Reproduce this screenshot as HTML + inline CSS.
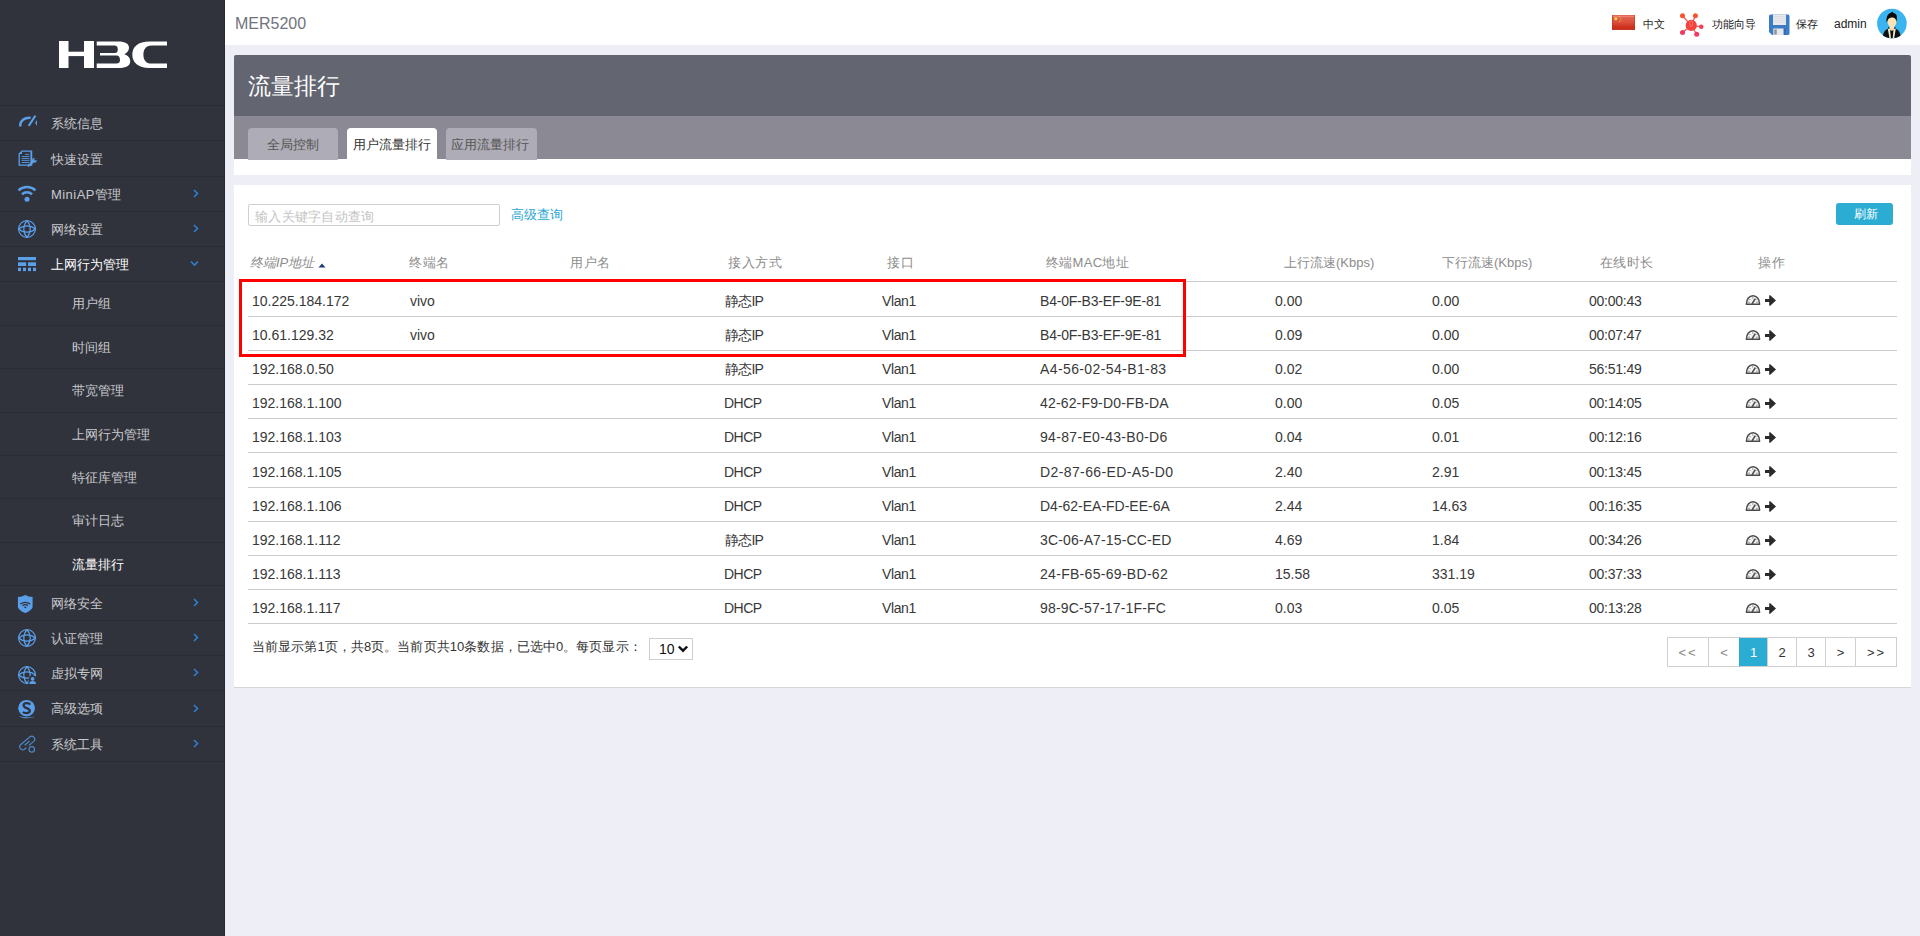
<!DOCTYPE html>
<html><head><meta charset="utf-8">
<style>
*{box-sizing:border-box}
html,body{margin:0;padding:0;width:1920px;height:936px;overflow:hidden;background:#eeeef6;font-family:"Liberation Sans",sans-serif;font-size:13px;color:#333}
.a{position:absolute;white-space:nowrap}
#side{position:absolute;left:0;top:0;width:225px;height:936px;background:#30333c;border-right:1px solid #272a31}
.sep{position:absolute;left:0;width:224px;height:1px;background:#2a2c33}
.mi{position:absolute;left:51px;color:#c9c9cc;font-size:13px;line-height:16px;white-space:nowrap}
.si{position:absolute;left:72px;color:#c9c9cc;font-size:13px;line-height:16px;white-space:nowrap}
.ic{position:absolute;left:17px}
.chev{position:absolute;left:192px}
#hdr{position:absolute;left:225px;top:0;width:1695px;height:45px;background:#fff}
#title{position:absolute;left:234px;top:55px;width:1677px;height:61px;background:#636571;border-radius:2px 2px 0 0}
#tabbar{position:absolute;left:234px;top:116px;width:1677px;height:43px;background:#8b8994}
.tab{position:absolute;top:128px;height:32px;background:#aeacb6;border-radius:4px 4px 0 0;color:#555;font-size:13px;line-height:32px;padding-top:1px}
#strip{position:absolute;left:234px;top:159px;width:1677px;height:16px;background:#fff}
#card{position:absolute;left:234px;top:185px;width:1677px;height:503px;background:#fff;border-bottom:1px solid #d6d6d6}
.th{position:absolute;color:#8c8c8c;font-size:13px;line-height:16px;white-space:nowrap}
.rl{position:absolute;left:248px;width:1649px;height:1px;background:#cbcbcb}
.td{position:absolute;color:#383838;font-size:14px;line-height:16px;white-space:nowrap}
.pg{position:absolute;top:637px;height:30px;border:1px solid #d0d0d0;border-right:none;text-align:center;line-height:30px;font-size:13px;color:#333;background:#fff}
</style></head><body>
<div id="side">
<svg class="a" style="left:59px;top:41px" width="108" height="27" viewBox="0 0 108 27"><g fill="#fff">
<rect x="0" y="0" width="9.5" height="27"/><rect x="25" y="0" width="10" height="27"/><rect x="9" y="10.7" width="16" height="4.4"/>
<path d="M37.7 0.6 H59 C66.5 0.6 70 3 70 6.8 C70 9.6 68.2 12 65.3 13.2 C68.7 14.2 71.2 16.8 71.2 20.2 C71.2 24.6 67.5 27 59.5 27 H37.7 V22.5 H57.5 C60 22.5 61 21 61 19 C61 16.5 60 14.4 57.5 14.4 H41 V12 H56 C58 12 58.8 10.3 58.8 8.2 C58.8 6 57.8 4.4 55.5 4.4 H37.7 Z"/>
<path d="M108 0.6 V4.4 H92.5 C86.8 4.4 84.4 8.5 84.4 13.8 C84.4 19 86.8 22.6 92.5 22.6 H108 V27 H90.5 C79 27 73.3 21.5 73.3 13.8 C73.3 6 79 0.6 90.5 0.6 Z"/>
</g></svg>
<div class="sep" style="top:105px"></div>
<div class="sep" style="top:140px"></div>
<div class="sep" style="top:176px"></div>
<div class="sep" style="top:211px"></div>
<div class="sep" style="top:246px"></div>
<div class="sep" style="top:281px"></div>
<div class="sep" style="top:325px"></div>
<div class="sep" style="top:368px"></div>
<div class="sep" style="top:412px"></div>
<div class="sep" style="top:455px"></div>
<div class="sep" style="top:498px"></div>
<div class="sep" style="top:542px"></div>
<div class="sep" style="top:585px"></div>
<div class="sep" style="top:620px"></div>
<div class="sep" style="top:655px"></div>
<div class="sep" style="top:690px"></div>
<div class="sep" style="top:726px"></div>
<div class="sep" style="top:761px"></div>
<div class="mi" style="top:115.5px">系统信息</div>
<div class="mi" style="top:152.0px">快速设置</div>
<div class="mi" style="top:186.5px;letter-spacing:0.45px">MiniAP管理</div>
<div class="mi" style="top:221.5px">网络设置</div>
<div class="mi" style="top:256.5px;color:#fff">上网行为管理</div>
<div class="mi" style="top:595.5px">网络安全</div>
<div class="mi" style="top:630.5px">认证管理</div>
<div class="mi" style="top:665.5px">虚拟专网</div>
<div class="mi" style="top:701.0px">高级选项</div>
<div class="mi" style="top:736.5px">系统工具</div>
<div class="si" style="top:296.0px">用户组</div>
<div class="si" style="top:339.5px">时间组</div>
<div class="si" style="top:383.0px">带宽管理</div>
<div class="si" style="top:426.5px">上网行为管理</div>
<div class="si" style="top:469.5px">特征库管理</div>
<div class="si" style="top:513.0px">审计日志</div>
<div class="si" style="top:556.5px;color:#fff">流量排行</div>
<svg class="chev" style="top:189.0px" width="8" height="9" viewBox="0 0 8 9"><path d="M2 1 L5.5 4.5 L2 8" fill="none" stroke="#2f7fd1" stroke-width="1.6"/></svg>
<svg class="chev" style="top:224.0px" width="8" height="9" viewBox="0 0 8 9"><path d="M2 1 L5.5 4.5 L2 8" fill="none" stroke="#2f7fd1" stroke-width="1.6"/></svg>
<svg class="chev" style="top:598.0px" width="8" height="9" viewBox="0 0 8 9"><path d="M2 1 L5.5 4.5 L2 8" fill="none" stroke="#2f7fd1" stroke-width="1.6"/></svg>
<svg class="chev" style="top:633.0px" width="8" height="9" viewBox="0 0 8 9"><path d="M2 1 L5.5 4.5 L2 8" fill="none" stroke="#2f7fd1" stroke-width="1.6"/></svg>
<svg class="chev" style="top:668.0px" width="8" height="9" viewBox="0 0 8 9"><path d="M2 1 L5.5 4.5 L2 8" fill="none" stroke="#2f7fd1" stroke-width="1.6"/></svg>
<svg class="chev" style="top:703.5px" width="8" height="9" viewBox="0 0 8 9"><path d="M2 1 L5.5 4.5 L2 8" fill="none" stroke="#2f7fd1" stroke-width="1.6"/></svg>
<svg class="chev" style="top:739.0px" width="8" height="9" viewBox="0 0 8 9"><path d="M2 1 L5.5 4.5 L2 8" fill="none" stroke="#2f7fd1" stroke-width="1.6"/></svg>
<svg class="chev" style="left:190px;top:260px" width="9" height="7" viewBox="0 0 9 7"><path d="M1 1.5 L4.5 5 L8 1.5" fill="none" stroke="#2f7fd1" stroke-width="1.6"/></svg>
<svg class="ic" style="top:114px" width="22" height="14" viewBox="0 0 22 14"><path d="M3.2 11.4 C3.6 6.6 7.2 3.7 12.6 3.7" fill="none" stroke="#5b9fe8" stroke-width="2.6" stroke-linecap="round"/><path d="M11.7 11.9 L18.4 1.6" stroke="#5b9fe8" stroke-width="2"/><path d="M18.2 8.8 L20 6 V11.9 Z" fill="#5b9fe8"/></svg>
<svg class="ic" style="top:150px;left:18px" width="22" height="18" viewBox="0 0 22 18"><path d="M1.2 4 L4 1.2 H13.6 V15.1 H1.2 Z" fill="none" stroke="#5b9fe8" stroke-width="1.3"/><path d="M1.2 4 L4 1.2 V4 Z" fill="#5b9fe8"/><path d="M12.5 2 V14.5" stroke="#5b9fe8" stroke-width="1.2" opacity="0.6"/><path d="M7 4.4 H11 M3.6 6.5 H11.3 M3.6 8.5 H11.3 M3.6 10.4 H11.3 M3.6 12.5 H11.3" stroke="#5b9fe8" stroke-width="1" opacity="0.85"/><path d="M10.6 15.7 L15.6 11.2" stroke="#5b9fe8" stroke-width="2.2" stroke-linecap="round"/><circle cx="16.4" cy="10.4" r="2.4" fill="#5b9fe8"/><circle cx="17.6" cy="9.2" r="1.2" fill="#30333c"/></svg>
<svg class="ic" style="top:185px" width="22" height="18" viewBox="0 0 22 18"><path d="M1.5 5.4 A12.5 12.5 0 0 1 18.5 5.4" fill="none" stroke="#5b9fe8" stroke-width="2.5"/><path d="M4.9 9.3 A7.5 7.5 0 0 1 15.1 9.3" fill="none" stroke="#5b9fe8" stroke-width="2.5"/><circle cx="10" cy="14.3" r="2.5" fill="#5b9fe8"/></svg>
<svg class="ic" style="top:219px" width="20" height="20" viewBox="0 0 20 20"><g fill="none" stroke="#5b9fe8" stroke-width="1.2"><circle cx="10" cy="10" r="8.4"/><path d="M10 1.6 A12.6 12.6 0 0 1 10 18.4 A12.6 12.6 0 0 1 10 1.6 Z M1.6 10 A12.6 12.6 0 0 1 18.4 10 A12.6 12.6 0 0 1 1.6 10 Z"/></g></svg>
<svg class="ic" style="top:256px" width="20" height="16" viewBox="0 0 20 16"><g fill="#5b9fe8"><rect x="1" y="1" width="18" height="3.2"/><rect x="1" y="6.3" width="8.2" height="3.7"/><rect x="11" y="6.3" width="8" height="3.7"/><rect x="1" y="11.7" width="3" height="3.4"/><rect x="6" y="11.7" width="3" height="3.4"/><rect x="11" y="11.7" width="3" height="3.4"/><rect x="16" y="11.7" width="3" height="3.4"/></g></svg>
<svg class="ic" style="top:594px" width="18" height="20" viewBox="0 0 18 20"><path d="M0.9 3.1 Q5 3 8.25 0.9 Q11.5 3 15.6 3.1 V13.2 Q14 16.8 8.25 19.1 Q2.5 16.8 0.9 13.2 Z" fill="#5b9fe8"/><path d="M3.3 10 Q8.25 6.6 13.2 10" fill="none" stroke="#30333c" stroke-width="1.2"/><path d="M5.4 11.7 Q8.25 9.6 11.1 11.7" fill="none" stroke="#30333c" stroke-width="1.2"/><path d="M6.9 13.1 Q8.25 12.1 9.6 13.1 L8.25 14.6 Z" fill="#30333c"/></svg>
<svg class="ic" style="top:628px" width="20" height="20" viewBox="0 0 20 20"><g fill="none" stroke="#5b9fe8" stroke-width="1.2"><circle cx="10" cy="10" r="8.4"/><path d="M10 1.6 A12.6 12.6 0 0 1 10 18.4 A12.6 12.6 0 0 1 10 1.6 Z M1.6 10 A12.6 12.6 0 0 1 18.4 10 A12.6 12.6 0 0 1 1.6 10 Z"/></g></svg>
<svg class="ic" style="top:665px" width="20" height="20" viewBox="0 0 20 20"><g fill="none" stroke="#5b9fe8" stroke-width="1.2"><circle cx="10" cy="10" r="8.4"/><path d="M10 1.6 A12.6 12.6 0 0 1 10 18.4 A12.6 12.6 0 0 1 10 1.6 Z M1.6 10 A12.6 12.6 0 0 1 18.4 10 A12.6 12.6 0 0 1 1.6 10 Z"/></g><path d="M11.5 20 V14.5 C11.5 12 13 10.5 15.5 10.5 C18 10.5 20 12 20 14 V20 Z" fill="#30333c"/><circle cx="15.6" cy="13.8" r="1.9" fill="#5b9fe8"/><path d="M12.3 19 C12.3 16.6 13.8 16 15.6 16 C17.4 16 19 16.6 19 19 Z" fill="#5b9fe8"/></svg>
<svg class="ic" style="top:696px" width="20" height="23" viewBox="0 0 20 23"><circle cx="9.6" cy="12.2" r="8.3" fill="#5b9fe8"/><path d="M13.2 8.6 C12 6.6 6.6 6.4 6.6 9.4 C6.6 12.4 12.8 11.8 12.8 14.8 C12.8 17.6 7.6 17.6 5.8 16" fill="none" stroke="#30333c" stroke-width="2.3"/><path d="M1.8 20 C6 21.6 13 22 18.2 20.6 C13.5 23 6 23 1.8 20 Z" fill="#5b9fe8"/></svg>
<svg class="ic" style="top:734px" width="20" height="20" viewBox="0 0 20 20"><g fill="none" stroke="#4f86c2" stroke-width="1.2"><rect x="1.5" y="6.2" width="17.5" height="6" rx="2.6" transform="rotate(-40 10 9.2)"/><path d="M7.6 11.2 L12.6 7"/><circle cx="14.8" cy="15.4" r="2.7"/></g><path d="M9.5 13.8 L12 11.6" stroke="#30333c" stroke-width="2"/></svg>
</div>
<div id="hdr"><div class="a" style="left:10px;top:15px;font-size:16px;line-height:18px;color:#71737d">MER5200</div></div>
<svg class="a" style="left:1612px;top:15px" width="23" height="15" viewBox="0 0 23 15"><defs><linearGradient id="fg" x1="0" y1="0" x2="0" y2="1"><stop offset="0" stop-color="#e56a5a"/><stop offset="0.5" stop-color="#da4e3a"/><stop offset="0.85" stop-color="#cc2c18"/><stop offset="1" stop-color="#c43a2a"/></linearGradient></defs><rect width="23" height="15" fill="url(#fg)"/><rect x="0.5" y="1" width="22" height="0.8" fill="#f5a090" opacity="0.6"/><rect x="0" y="0" width="0.8" height="15" fill="#b8301f" opacity="0.5"/><rect x="22.2" y="0" width="0.8" height="15" fill="#b8301f" opacity="0.5"/><circle cx="3.8" cy="3.8" r="1.5" fill="#f6de40"/><circle cx="7.5" cy="1.6" r="0.6" fill="#f0c050"/><circle cx="9" cy="3.2" r="0.6" fill="#eea050"/><circle cx="9" cy="5.2" r="0.6" fill="#eea050"/><circle cx="7.6" cy="6.7" r="0.6" fill="#eea050"/></svg>
<div class="a" style="left:1643px;top:17px;font-size:11px;line-height:14px;color:#222">中文</div>
<svg class="a" style="left:1679px;top:13px" width="25" height="25" viewBox="0 0 25 25"><g stroke="#f5484a" stroke-width="1.1" fill="none"><path d="M3.5 2.8 L12.25 12.4 L16.4 2.8 M12.25 12.4 L22.25 13.7 M12.25 12.4 L17.7 21.2 M12.25 12.4 L3.5 19.5"/></g><circle cx="3.5" cy="2.8" r="2.5" fill="#f8532e"/><circle cx="16.4" cy="2.8" r="2.5" fill="#f8532e"/><circle cx="22.2" cy="13.7" r="2.3" fill="#f43e58"/><circle cx="17.7" cy="21.2" r="2.5" fill="#f03a64"/><circle cx="3.5" cy="19.5" r="2.5" fill="#f03a64"/><circle cx="12.25" cy="12.4" r="5.6" fill="#f2433f"/><path d="M11 10.5 A1.6 1.6 0 1 1 13.5 10.5 L13 13.5 H11.5 Z" fill="none" stroke="#ff8f80" stroke-width="0.6"/></svg>
<div class="a" style="left:1712px;top:17px;font-size:11px;line-height:14px;color:#222">功能向导</div>
<svg class="a" style="left:1769px;top:14px" width="21" height="22" viewBox="0 0 21 22"><path d="M2 0.5 H19 Q20.5 0.5 20.5 2 V19.5 Q20.5 21 19 21 H3 L0 18 V2 Q0 0.5 2 0.5 Z" fill="#3c7cc6"/><rect x="4" y="0.5" width="13" height="10.5" fill="#e8eaed"/><path d="M4.5 2.5 H16.5 M4.5 4.5 H16.5 M4.5 6.5 H16.5 M4.5 8.5 H16.5" stroke="#d0d4da" stroke-width="0.6"/><rect x="4.3" y="14.5" width="10.2" height="6.5" fill="#e6e7e9"/><rect x="5.3" y="15.5" width="2.4" height="5" fill="#8c9192"/><rect x="15" y="14.5" width="2" height="6.5" fill="#2e64a4" opacity="0.6"/></svg>
<div class="a" style="left:1796px;top:17px;font-size:11px;line-height:14px;color:#222">保存</div>
<div class="a" style="left:1834px;top:17px;font-size:12px;line-height:14px;color:#222">admin</div>
<svg class="a" style="left:1877px;top:8px" width="31" height="31" viewBox="0 0 31 31"><defs><clipPath id="cc"><circle cx="14.9" cy="15.5" r="14.8"/></clipPath></defs><circle cx="14.9" cy="15.5" r="14.8" fill="#3ab4f0"/><g clip-path="url(#cc)"><path d="M5.5 31 C6 24.5 8 21.5 11.5 20.5 L11 18.8 L14.8 21 L18.6 18.8 L18.2 20.5 C21.5 21.5 23.5 24.5 24.2 31 Z" fill="#0e0e0e"/><path d="M10.8 20.8 L12.6 31 H14 L13 21 Z M18.8 20.8 L17 31 H15.6 L16.6 21 Z" fill="#ecebcc"/><path d="M12.5 19.5 C13.5 21.5 16 21.5 17.2 19.5 L16.8 22 C15.5 23 14 23 13 22 Z" fill="#fbe3b5"/><circle cx="14.8" cy="21.3" r="0.9" fill="#f7a94a"/><rect x="12.6" y="17" width="4.6" height="4.5" fill="#fbe3b5"/><ellipse cx="15" cy="13.6" rx="4.5" ry="5.6" fill="#fbe3b5"/><path d="M9.6 14.5 C9 9.5 10.5 5.8 13.8 4.8 L15.6 3.6 L16.4 4.9 C18.8 5.4 20.2 7 19.9 9.6 L19.6 14 C19 11.2 18 9.6 16 9.4 C13.8 9.3 12.2 9.8 11.2 11.2 Z" fill="#0a0a0a"/></g></svg>
<div id="title"><div class="a" style="left:14px;top:17px;font-size:23px;color:#fff;line-height:28px">流量排行</div></div>
<div id="tabbar"></div>
<div id="strip"></div>
<div id="card"></div>
<div class="tab" style="left:248px;width:90px;padding-left:19px">全局控制</div>
<div class="tab" style="left:347px;width:90px;background:#fff;color:#333;padding-left:6px;height:31px">用户流量排行</div>
<div class="tab" style="left:446px;width:91px;padding-left:5px">应用流量排行</div>
<div class="a" style="left:248px;top:204px;width:252px;height:22px;border:1px solid #cfcfcf;border-radius:2px;background:#fff"></div>
<div class="a" style="left:255px;top:209px;font-size:13px;line-height:16px;color:#c4c4c4;letter-spacing:0.3px">输入关键字自动查询</div>
<div class="a" style="left:511px;top:207px;font-size:13px;line-height:16px;color:#2ea7d4">高级查询</div>
<div class="a" style="left:1836px;top:203px;width:57px;height:22px;background:#2badd3;border-radius:3px;color:#fff;font-size:12px;line-height:23px;text-align:center;padding-left:2px">刷新</div>
<div class="th" style="left:250px;top:255px;font-style:italic">终端IP地址</div>
<div class="th" style="left:409px;top:255px;letter-spacing:0.5px">终端名</div>
<div class="th" style="left:570px;top:255px;letter-spacing:0.5px">用户名</div>
<div class="th" style="left:728px;top:255px;letter-spacing:0.5px">接入方式</div>
<div class="th" style="left:887px;top:255px;letter-spacing:1px">接口</div>
<div class="th" style="left:1046px;top:255px;letter-spacing:0.3px">终端MAC地址</div>
<div class="th" style="left:1284px;top:255px">上行流速(Kbps)</div>
<div class="th" style="left:1442px;top:255px">下行流速(Kbps)</div>
<div class="th" style="left:1600px;top:255px;letter-spacing:0.3px">在线时长</div>
<div class="th" style="left:1758px;top:255px;letter-spacing:1px">操作</div>
<svg class="a" style="left:318px;top:263px" width="8" height="5" viewBox="0 0 8 5"><path d="M0.5 4.5 L4 0.5 L7.5 4.5 Z" fill="#1f3b6e"/></svg>
<div class="rl" style="top:281px"></div>
<div class="rl" style="top:316px"></div>
<div class="rl" style="top:350px"></div>
<div class="rl" style="top:384px"></div>
<div class="rl" style="top:418px"></div>
<div class="rl" style="top:452px"></div>
<div class="rl" style="top:487px"></div>
<div class="rl" style="top:521px"></div>
<div class="rl" style="top:555px"></div>
<div class="rl" style="top:589px"></div>
<div class="rl" style="top:623px"></div>
<div class="td" style="left:252px;top:292.5px">10.225.184.172</div>
<div class="td" style="left:410px;top:292.5px">vivo</div>
<div class="td" style="left:725px;top:292.5px;letter-spacing:-0.8px">静态IP</div>
<div class="td" style="left:882px;top:292.5px;letter-spacing:-0.4px">Vlan1</div>
<div class="td" style="left:1040px;top:292.5px;letter-spacing:-0.2px">B4-0F-B3-EF-9E-81</div>
<div class="td" style="left:1275px;top:292.5px">0.00</div>
<div class="td" style="left:1432px;top:292.5px">0.00</div>
<div class="td" style="left:1589px;top:292.5px;letter-spacing:-0.25px">00:00:43</div>
<svg class="a" style="left:1745px;top:294.0px" width="16" height="12" viewBox="0 0 16 12"><path d="M1.4 10.3 C1.4 5 4.4 1.8 8 1.8 C11.6 1.8 14.6 5 14.6 10.3 Z" fill="#f4f4f4" stroke="#4a4a4a" stroke-width="1.5" stroke-linejoin="round"/><path d="M7 10 L10.3 4.6" stroke="#505050" stroke-width="1.6"/><path d="M3.3 8.2 H4.7 M4.7 5.2 L5.6 6.1 M7.8 3.4 V4.6 M11.3 5.2 L10.4 6.1 M12.7 8.2 H11.3" stroke="#777" stroke-width="1"/></svg>
<svg class="a" style="left:1765px;top:295.0px" width="11" height="11" viewBox="0 0 11 11"><path d="M0 4 H4.2 V0.3 H5.2 L11 5.5 L5.2 10.7 H4.2 V7 H0 Z" fill="#2b2b2b"/></svg>
<div class="td" style="left:252px;top:327.0px">10.61.129.32</div>
<div class="td" style="left:410px;top:327.0px">vivo</div>
<div class="td" style="left:725px;top:327.0px;letter-spacing:-0.8px">静态IP</div>
<div class="td" style="left:882px;top:327.0px;letter-spacing:-0.4px">Vlan1</div>
<div class="td" style="left:1040px;top:327.0px;letter-spacing:-0.2px">B4-0F-B3-EF-9E-81</div>
<div class="td" style="left:1275px;top:327.0px">0.09</div>
<div class="td" style="left:1432px;top:327.0px">0.00</div>
<div class="td" style="left:1589px;top:327.0px;letter-spacing:-0.25px">00:07:47</div>
<svg class="a" style="left:1745px;top:328.5px" width="16" height="12" viewBox="0 0 16 12"><path d="M1.4 10.3 C1.4 5 4.4 1.8 8 1.8 C11.6 1.8 14.6 5 14.6 10.3 Z" fill="#f4f4f4" stroke="#4a4a4a" stroke-width="1.5" stroke-linejoin="round"/><path d="M7 10 L10.3 4.6" stroke="#505050" stroke-width="1.6"/><path d="M3.3 8.2 H4.7 M4.7 5.2 L5.6 6.1 M7.8 3.4 V4.6 M11.3 5.2 L10.4 6.1 M12.7 8.2 H11.3" stroke="#777" stroke-width="1"/></svg>
<svg class="a" style="left:1765px;top:329.5px" width="11" height="11" viewBox="0 0 11 11"><path d="M0 4 H4.2 V0.3 H5.2 L11 5.5 L5.2 10.7 H4.2 V7 H0 Z" fill="#2b2b2b"/></svg>
<div class="td" style="left:252px;top:361.0px">192.168.0.50</div>
<div class="td" style="left:725px;top:361.0px;letter-spacing:-0.8px">静态IP</div>
<div class="td" style="left:882px;top:361.0px;letter-spacing:-0.4px">Vlan1</div>
<div class="td" style="left:1040px;top:361.0px;letter-spacing:0.39px">A4-56-02-54-B1-83</div>
<div class="td" style="left:1275px;top:361.0px">0.02</div>
<div class="td" style="left:1432px;top:361.0px">0.00</div>
<div class="td" style="left:1589px;top:361.0px;letter-spacing:-0.25px">56:51:49</div>
<svg class="a" style="left:1745px;top:362.5px" width="16" height="12" viewBox="0 0 16 12"><path d="M1.4 10.3 C1.4 5 4.4 1.8 8 1.8 C11.6 1.8 14.6 5 14.6 10.3 Z" fill="#f4f4f4" stroke="#4a4a4a" stroke-width="1.5" stroke-linejoin="round"/><path d="M7 10 L10.3 4.6" stroke="#505050" stroke-width="1.6"/><path d="M3.3 8.2 H4.7 M4.7 5.2 L5.6 6.1 M7.8 3.4 V4.6 M11.3 5.2 L10.4 6.1 M12.7 8.2 H11.3" stroke="#777" stroke-width="1"/></svg>
<svg class="a" style="left:1765px;top:363.5px" width="11" height="11" viewBox="0 0 11 11"><path d="M0 4 H4.2 V0.3 H5.2 L11 5.5 L5.2 10.7 H4.2 V7 H0 Z" fill="#2b2b2b"/></svg>
<div class="td" style="left:252px;top:395.0px">192.168.1.100</div>
<div class="td" style="left:725px;top:395.0px;letter-spacing:-0.5px;margin-left:-1px">DHCP</div>
<div class="td" style="left:882px;top:395.0px;letter-spacing:-0.4px">Vlan1</div>
<div class="td" style="left:1040px;top:395.0px;letter-spacing:0.16px">42-62-F9-D0-FB-DA</div>
<div class="td" style="left:1275px;top:395.0px">0.00</div>
<div class="td" style="left:1432px;top:395.0px">0.05</div>
<div class="td" style="left:1589px;top:395.0px;letter-spacing:-0.25px">00:14:05</div>
<svg class="a" style="left:1745px;top:396.5px" width="16" height="12" viewBox="0 0 16 12"><path d="M1.4 10.3 C1.4 5 4.4 1.8 8 1.8 C11.6 1.8 14.6 5 14.6 10.3 Z" fill="#f4f4f4" stroke="#4a4a4a" stroke-width="1.5" stroke-linejoin="round"/><path d="M7 10 L10.3 4.6" stroke="#505050" stroke-width="1.6"/><path d="M3.3 8.2 H4.7 M4.7 5.2 L5.6 6.1 M7.8 3.4 V4.6 M11.3 5.2 L10.4 6.1 M12.7 8.2 H11.3" stroke="#777" stroke-width="1"/></svg>
<svg class="a" style="left:1765px;top:397.5px" width="11" height="11" viewBox="0 0 11 11"><path d="M0 4 H4.2 V0.3 H5.2 L11 5.5 L5.2 10.7 H4.2 V7 H0 Z" fill="#2b2b2b"/></svg>
<div class="td" style="left:252px;top:429.0px">192.168.1.103</div>
<div class="td" style="left:725px;top:429.0px;letter-spacing:-0.5px;margin-left:-1px">DHCP</div>
<div class="td" style="left:882px;top:429.0px;letter-spacing:-0.4px">Vlan1</div>
<div class="td" style="left:1040px;top:429.0px;letter-spacing:0.32px">94-87-E0-43-B0-D6</div>
<div class="td" style="left:1275px;top:429.0px">0.04</div>
<div class="td" style="left:1432px;top:429.0px">0.01</div>
<div class="td" style="left:1589px;top:429.0px;letter-spacing:-0.25px">00:12:16</div>
<svg class="a" style="left:1745px;top:430.5px" width="16" height="12" viewBox="0 0 16 12"><path d="M1.4 10.3 C1.4 5 4.4 1.8 8 1.8 C11.6 1.8 14.6 5 14.6 10.3 Z" fill="#f4f4f4" stroke="#4a4a4a" stroke-width="1.5" stroke-linejoin="round"/><path d="M7 10 L10.3 4.6" stroke="#505050" stroke-width="1.6"/><path d="M3.3 8.2 H4.7 M4.7 5.2 L5.6 6.1 M7.8 3.4 V4.6 M11.3 5.2 L10.4 6.1 M12.7 8.2 H11.3" stroke="#777" stroke-width="1"/></svg>
<svg class="a" style="left:1765px;top:431.5px" width="11" height="11" viewBox="0 0 11 11"><path d="M0 4 H4.2 V0.3 H5.2 L11 5.5 L5.2 10.7 H4.2 V7 H0 Z" fill="#2b2b2b"/></svg>
<div class="td" style="left:252px;top:463.5px">192.168.1.105</div>
<div class="td" style="left:725px;top:463.5px;letter-spacing:-0.5px;margin-left:-1px">DHCP</div>
<div class="td" style="left:882px;top:463.5px;letter-spacing:-0.4px">Vlan1</div>
<div class="td" style="left:1040px;top:463.5px;letter-spacing:0.39px">D2-87-66-ED-A5-D0</div>
<div class="td" style="left:1275px;top:463.5px">2.40</div>
<div class="td" style="left:1432px;top:463.5px">2.91</div>
<div class="td" style="left:1589px;top:463.5px;letter-spacing:-0.25px">00:13:45</div>
<svg class="a" style="left:1745px;top:465.0px" width="16" height="12" viewBox="0 0 16 12"><path d="M1.4 10.3 C1.4 5 4.4 1.8 8 1.8 C11.6 1.8 14.6 5 14.6 10.3 Z" fill="#f4f4f4" stroke="#4a4a4a" stroke-width="1.5" stroke-linejoin="round"/><path d="M7 10 L10.3 4.6" stroke="#505050" stroke-width="1.6"/><path d="M3.3 8.2 H4.7 M4.7 5.2 L5.6 6.1 M7.8 3.4 V4.6 M11.3 5.2 L10.4 6.1 M12.7 8.2 H11.3" stroke="#777" stroke-width="1"/></svg>
<svg class="a" style="left:1765px;top:466.0px" width="11" height="11" viewBox="0 0 11 11"><path d="M0 4 H4.2 V0.3 H5.2 L11 5.5 L5.2 10.7 H4.2 V7 H0 Z" fill="#2b2b2b"/></svg>
<div class="td" style="left:252px;top:498.0px">192.168.1.106</div>
<div class="td" style="left:725px;top:498.0px;letter-spacing:-0.5px;margin-left:-1px">DHCP</div>
<div class="td" style="left:882px;top:498.0px;letter-spacing:-0.4px">Vlan1</div>
<div class="td" style="left:1040px;top:498.0px;letter-spacing:-0.01px">D4-62-EA-FD-EE-6A</div>
<div class="td" style="left:1275px;top:498.0px">2.44</div>
<div class="td" style="left:1432px;top:498.0px">14.63</div>
<div class="td" style="left:1589px;top:498.0px;letter-spacing:-0.25px">00:16:35</div>
<svg class="a" style="left:1745px;top:499.5px" width="16" height="12" viewBox="0 0 16 12"><path d="M1.4 10.3 C1.4 5 4.4 1.8 8 1.8 C11.6 1.8 14.6 5 14.6 10.3 Z" fill="#f4f4f4" stroke="#4a4a4a" stroke-width="1.5" stroke-linejoin="round"/><path d="M7 10 L10.3 4.6" stroke="#505050" stroke-width="1.6"/><path d="M3.3 8.2 H4.7 M4.7 5.2 L5.6 6.1 M7.8 3.4 V4.6 M11.3 5.2 L10.4 6.1 M12.7 8.2 H11.3" stroke="#777" stroke-width="1"/></svg>
<svg class="a" style="left:1765px;top:500.5px" width="11" height="11" viewBox="0 0 11 11"><path d="M0 4 H4.2 V0.3 H5.2 L11 5.5 L5.2 10.7 H4.2 V7 H0 Z" fill="#2b2b2b"/></svg>
<div class="td" style="left:252px;top:532.0px">192.168.1.112</div>
<div class="td" style="left:725px;top:532.0px;letter-spacing:-0.8px">静态IP</div>
<div class="td" style="left:882px;top:532.0px;letter-spacing:-0.4px">Vlan1</div>
<div class="td" style="left:1040px;top:532.0px;letter-spacing:0.14px">3C-06-A7-15-CC-ED</div>
<div class="td" style="left:1275px;top:532.0px">4.69</div>
<div class="td" style="left:1432px;top:532.0px">1.84</div>
<div class="td" style="left:1589px;top:532.0px;letter-spacing:-0.25px">00:34:26</div>
<svg class="a" style="left:1745px;top:533.5px" width="16" height="12" viewBox="0 0 16 12"><path d="M1.4 10.3 C1.4 5 4.4 1.8 8 1.8 C11.6 1.8 14.6 5 14.6 10.3 Z" fill="#f4f4f4" stroke="#4a4a4a" stroke-width="1.5" stroke-linejoin="round"/><path d="M7 10 L10.3 4.6" stroke="#505050" stroke-width="1.6"/><path d="M3.3 8.2 H4.7 M4.7 5.2 L5.6 6.1 M7.8 3.4 V4.6 M11.3 5.2 L10.4 6.1 M12.7 8.2 H11.3" stroke="#777" stroke-width="1"/></svg>
<svg class="a" style="left:1765px;top:534.5px" width="11" height="11" viewBox="0 0 11 11"><path d="M0 4 H4.2 V0.3 H5.2 L11 5.5 L5.2 10.7 H4.2 V7 H0 Z" fill="#2b2b2b"/></svg>
<div class="td" style="left:252px;top:566.0px">192.168.1.113</div>
<div class="td" style="left:725px;top:566.0px;letter-spacing:-0.5px;margin-left:-1px">DHCP</div>
<div class="td" style="left:882px;top:566.0px;letter-spacing:-0.4px">Vlan1</div>
<div class="td" style="left:1040px;top:566.0px;letter-spacing:0.3px">24-FB-65-69-BD-62</div>
<div class="td" style="left:1275px;top:566.0px">15.58</div>
<div class="td" style="left:1432px;top:566.0px">331.19</div>
<div class="td" style="left:1589px;top:566.0px;letter-spacing:-0.25px">00:37:33</div>
<svg class="a" style="left:1745px;top:567.5px" width="16" height="12" viewBox="0 0 16 12"><path d="M1.4 10.3 C1.4 5 4.4 1.8 8 1.8 C11.6 1.8 14.6 5 14.6 10.3 Z" fill="#f4f4f4" stroke="#4a4a4a" stroke-width="1.5" stroke-linejoin="round"/><path d="M7 10 L10.3 4.6" stroke="#505050" stroke-width="1.6"/><path d="M3.3 8.2 H4.7 M4.7 5.2 L5.6 6.1 M7.8 3.4 V4.6 M11.3 5.2 L10.4 6.1 M12.7 8.2 H11.3" stroke="#777" stroke-width="1"/></svg>
<svg class="a" style="left:1765px;top:568.5px" width="11" height="11" viewBox="0 0 11 11"><path d="M0 4 H4.2 V0.3 H5.2 L11 5.5 L5.2 10.7 H4.2 V7 H0 Z" fill="#2b2b2b"/></svg>
<div class="td" style="left:252px;top:600.0px">192.168.1.117</div>
<div class="td" style="left:725px;top:600.0px;letter-spacing:-0.5px;margin-left:-1px">DHCP</div>
<div class="td" style="left:882px;top:600.0px;letter-spacing:-0.4px">Vlan1</div>
<div class="td" style="left:1040px;top:600.0px;letter-spacing:0.19px">98-9C-57-17-1F-FC</div>
<div class="td" style="left:1275px;top:600.0px">0.03</div>
<div class="td" style="left:1432px;top:600.0px">0.05</div>
<div class="td" style="left:1589px;top:600.0px;letter-spacing:-0.25px">00:13:28</div>
<svg class="a" style="left:1745px;top:601.5px" width="16" height="12" viewBox="0 0 16 12"><path d="M1.4 10.3 C1.4 5 4.4 1.8 8 1.8 C11.6 1.8 14.6 5 14.6 10.3 Z" fill="#f4f4f4" stroke="#4a4a4a" stroke-width="1.5" stroke-linejoin="round"/><path d="M7 10 L10.3 4.6" stroke="#505050" stroke-width="1.6"/><path d="M3.3 8.2 H4.7 M4.7 5.2 L5.6 6.1 M7.8 3.4 V4.6 M11.3 5.2 L10.4 6.1 M12.7 8.2 H11.3" stroke="#777" stroke-width="1"/></svg>
<svg class="a" style="left:1765px;top:602.5px" width="11" height="11" viewBox="0 0 11 11"><path d="M0 4 H4.2 V0.3 H5.2 L11 5.5 L5.2 10.7 H4.2 V7 H0 Z" fill="#2b2b2b"/></svg>
<div class="a" style="left:239px;top:279px;width:947px;height:78px;border:3px solid #ff0000"></div>
<div class="a" style="left:252px;top:639px;font-size:13px;line-height:16px;color:#333;letter-spacing:0.08px">当前显示第1页，共8页。当前页共10条数据，已选中0。每页显示：</div>
<div class="a" style="left:649px;top:638px;width:44px;height:22px;border:1px solid #cfcfcf;background:#fff"></div>
<div class="a" style="left:659px;top:641px;font-size:14px;line-height:16px;color:#111">10</div>
<svg class="a" style="left:677px;top:645px" width="12" height="8" viewBox="0 0 12 8"><path d="M1.8 1.5 L6 5.7 L10.2 1.5" fill="none" stroke="#111" stroke-width="2.4"/></svg>
<div class="pg" style="left:1667px;width:41px;color:#888;letter-spacing:2px">&lt;&lt;</div>
<div class="pg" style="left:1708px;width:31px;color:#888">&lt;</div>
<div class="pg" style="left:1739px;width:28px;color:#fff;background:#2badd3;border-left-color:#2badd3">1</div>
<div class="pg" style="left:1767px;width:29px;color:#333">2</div>
<div class="pg" style="left:1796px;width:29px;color:#333">3</div>
<div class="pg" style="left:1825px;width:30px;color:#333">&gt;</div>
<div class="pg" style="left:1855px;width:42px;color:#333;letter-spacing:2px">&gt;&gt;</div>
<div class="a" style="left:1896px;top:637px;width:1px;height:30px;background:#d0d0d0"></div>
</body></html>
